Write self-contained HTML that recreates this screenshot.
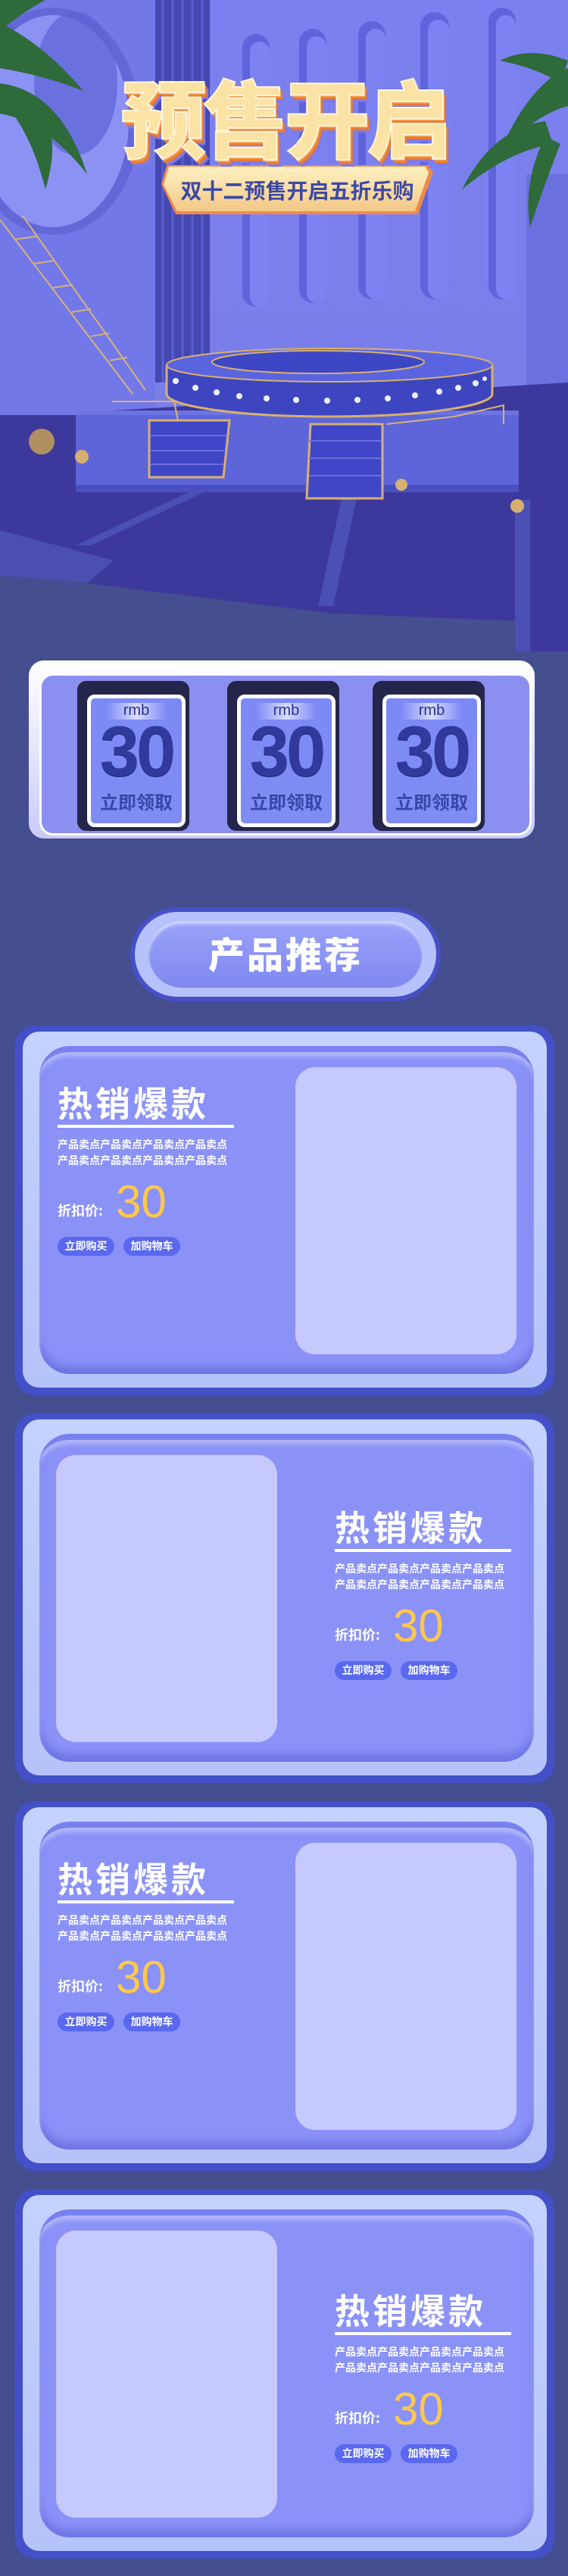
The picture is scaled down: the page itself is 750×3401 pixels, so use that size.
<!DOCTYPE html>
<html><head><meta charset="utf-8"><style>
*{margin:0;padding:0;box-sizing:border-box}
body{width:750px;height:3401px;background:#454e8f;position:relative;overflow:hidden;font-family:"Liberation Sans","Noto Sans CJK SC",sans-serif}
.abs{position:absolute}
.coupon{position:absolute;top:899px;width:148px;height:198px;background:#23264a;border-radius:12px}
.coupon .in{position:absolute;left:13px;top:18px;width:130px;height:175px;background:linear-gradient(#7d8af6,#7f8cf3);border:5px solid #fff;border-radius:10px;text-align:center;color:#2f3a9c}
.coupon .rmb{position:absolute;left:20px;right:20px;top:6px;height:22px;font-size:20px;line-height:20px;background:linear-gradient(90deg,rgba(255,255,255,0),rgba(255,255,255,.7),rgba(255,255,255,0));color:#2b3290}
.coupon .n{position:absolute;left:0;right:0;top:22px;font-size:94px;font-weight:bold;line-height:96px;letter-spacing:-4px;color:#2f3a9c;text-shadow:0 1px 0 #1c2470}
.coupon .t{position:absolute;left:0;right:0;top:118px;font-size:24px;font-weight:bold;color:#3a45a8;font-family:"Noto Sans CJK SC",sans-serif}
.card{position:absolute;left:20px;width:712px;height:488px;background:#4350c8;border-radius:26px}
.card .fr{position:absolute;left:10px;top:8px;right:10px;bottom:10px;background:linear-gradient(#c4d2ff,#b4c3fa);border-radius:22px}
.card .pn{position:absolute;left:32px;top:27px;width:653px;height:433px;background:#8a92f8;border-radius:40px;border-top:8px solid #7882ee;box-shadow:inset 0 6px 6px rgba(255,255,255,.35),inset 0 -10px 10px rgba(80,90,210,.5)}
.card .img{position:absolute;width:292px;height:379px;top:55px;background:#c6c9fd;border-radius:26px}
.txt{position:absolute;color:#fff;font-family:"Noto Sans CJK SC",sans-serif}
.txt .h{font-size:46px;font-weight:bold;line-height:46px;letter-spacing:4px;white-space:nowrap}
.txt .u{width:233px;height:4px;background:#fff;margin-top:7px}
.txt .d{font-size:14px;font-weight:bold;line-height:21px;margin-top:12px;white-space:nowrap}
.txt .p{margin-top:18px;height:50px;position:relative}
.txt .p span{position:absolute;left:0;bottom:0;font-size:18px;font-weight:bold}
.txt .p b{position:absolute;left:77px;bottom:-6px;font-size:60px;font-weight:normal;color:#fdc84a;font-family:"Liberation Sans",sans-serif;line-height:60px}
.txt .b{margin-top:22px;display:flex;gap:12px}
.txt .b i{font-style:normal;display:block;width:75px;height:25px;border-radius:13px;background:#5a68ef;font-size:14px;font-weight:bold;line-height:25px;text-align:center}
</style></head><body>

<svg class="abs" style="left:0;top:0" width="750" height="860" viewBox="0 0 750 860">
<defs>
<linearGradient id="wall" x1="0" y1="0" x2="0" y2="1"><stop offset="0" stop-color="#7b80f0"/><stop offset="1" stop-color="#7a7ee8"/></linearGradient>
<linearGradient id="gold" x1="0" y1="0" x2="0" y2="1"><stop offset="0" stop-color="#fff1c2"/><stop offset="1" stop-color="#f3c887"/></linearGradient>
</defs>
<rect width="750" height="860" fill="#454e8f"/>
<rect width="750" height="560" fill="url(#wall)"/>
<rect x="0" y="0" width="205" height="560" fill="#7378e8"/>
<ellipse cx="70" cy="160" rx="115" ry="150" fill="#6367d8"/>
<ellipse cx="70" cy="160" rx="100" ry="140" fill="#8b92f4"/>
<ellipse cx="100" cy="110" rx="55" ry="95" fill="#5e62d6" opacity=".7"/>
<rect x="205" y="0" width="72" height="505" fill="#4448b0"/>
<g stroke="#5a5fd0" stroke-width="3">
<line x1="215" y1="0" x2="215" y2="505"/><line x1="228" y1="0" x2="228" y2="505"/><line x1="241" y1="0" x2="241" y2="505"/><line x1="254" y1="0" x2="254" y2="505"/><line x1="267" y1="0" x2="267" y2="505"/></g>
<g fill="#5f63dc">
<rect x="320" y="45" width="36" height="360" rx="18"/><rect x="395" y="38" width="36" height="362" rx="18"/><rect x="473" y="28" width="36" height="367" rx="18"/><rect x="555" y="16" width="38" height="379" rx="19"/><rect x="645" y="10" width="36" height="385" rx="18"/></g>
<g fill="#7d82f2">
<rect x="330" y="55" width="26" height="350" rx="13"/><rect x="405" y="48" width="26" height="352" rx="13"/><rect x="483" y="38" width="26" height="357" rx="13"/><rect x="565" y="26" width="28" height="369" rx="14"/><rect x="655" y="20" width="26" height="375" rx="13"/></g>
<rect x="695" y="230" width="55" height="330" fill="#6b70e0"/>
<!-- floor -->
<polygon points="0,548 100,548 100,545 750,505 750,860 0,860" fill="#3d389c"/>
<!-- lighter gaps between tiles -->
<polygon points="0,700 150,740 115,770 0,760" fill="#4a4fb0"/>
<polygon points="115,770 440,810 440,860 110,860" fill="#454e8f"/>
<polygon points="0,760 115,770 110,860 0,860" fill="#454e8f"/>
<polygon points="440,810 690,820 700,860 440,860" fill="#454e8f"/>
<polygon points="270,640 290,640 120,720 100,720" fill="#4a50b4"/>
<polygon points="455,640 475,640 440,800 420,800" fill="#4a50b4"/>
<polygon points="680,660 700,660 700,860 680,860" fill="#4a50b4"/>
<!-- stage base -->
<rect x="100" y="542" width="585" height="108" fill="#5d65d8"/>
<rect x="100" y="542" width="585" height="6" fill="#6c74e4"/>
<rect x="100" y="640" width="585" height="10" fill="#4a4fc0"/>
<!-- stairs -->
<g fill="#3f47c8" stroke="#d8b070" stroke-width="3">
<polygon points="197,555 303,555 295,630 197,630"/><polygon points="410,560 505,560 505,658 405,658"/></g>
<g stroke="#6a70e0" stroke-width="2"><line x1="199" y1="575" x2="300" y2="575"/><line x1="199" y1="595" x2="298" y2="595"/><line x1="199" y1="613" x2="296" y2="613"/><line x1="408" y1="582" x2="503" y2="582"/><line x1="408" y1="605" x2="503" y2="605"/><line x1="408" y1="628" x2="503" y2="628"/></g>
<!-- rails -->
<g stroke="#d4b27a" stroke-width="2" fill="none"><path d="M148 530 L230 530 L235 555"/><path d="M510 560 L600 550 L665 535 L665 560"/></g>
<!-- disk -->
<ellipse cx="435" cy="520" rx="215" ry="30" fill="#3d46c0" stroke="#d7b06e" stroke-width="3"/>
<rect x="220" y="482" width="430" height="38" fill="#3d46c0"/>
<line x1="220" y1="482" x2="220" y2="520" stroke="#d7b06e" stroke-width="3"/><line x1="650" y1="482" x2="650" y2="520" stroke="#d7b06e" stroke-width="3"/>
<ellipse cx="435" cy="482" rx="215" ry="22" fill="#5a63e0" stroke="#d7b06e" stroke-width="2"/>
<ellipse cx="420" cy="478" rx="140" ry="15" fill="#3d46c4" stroke="#d7b06e" stroke-width="2"/>
<g fill="#eef0ff">
<circle cx="232" cy="503" r="4"/><circle cx="258" cy="512" r="4"/><circle cx="286" cy="518" r="4"/><circle cx="316" cy="523" r="4"/><circle cx="352" cy="526" r="4"/><circle cx="391" cy="528" r="4"/><circle cx="432" cy="529" r="4"/><circle cx="472" cy="528" r="4"/><circle cx="512" cy="526" r="4"/><circle cx="548" cy="522" r="4"/><circle cx="580" cy="517" r="4"/><circle cx="605" cy="512" r="4"/><circle cx="628" cy="506" r="4"/><circle cx="640" cy="500" r="3"/></g>
<!-- ladder -->
<g stroke="#d4b27a" stroke-width="2"><line x1="0" y1="290" x2="175" y2="520"/><line x1="30" y1="285" x2="192" y2="515"/>
<line x1="20" y1="316" x2="48" y2="312"/><line x1="45" y1="348" x2="72" y2="344"/><line x1="70" y1="380" x2="96" y2="376"/><line x1="95" y1="412" x2="120" y2="408"/><line x1="120" y1="444" x2="144" y2="440"/><line x1="145" y1="476" x2="168" y2="472"/></g>
<circle cx="55" cy="583" r="17" fill="#b09060"/><circle cx="108" cy="603" r="9" fill="#d6b070"/><circle cx="530" cy="640" r="8" fill="#d6b070"/><circle cx="683" cy="668" r="9" fill="#d6b070"/>
<g fill="#2e6a3a"><path d="M0 30 Q60 60 110 120 Q60 100 0 90Z"/><path d="M0 110 Q80 120 115 230 Q60 160 0 150Z"/><path d="M20 120 Q90 150 60 250 Q40 170 0 130Z"/><path d="M0 40 Q40 10 60 0 L0 0Z"/></g>
<g fill="#2e6a3a"><path d="M750 90 Q700 110 660 200 Q710 150 750 140Z"/><path d="M720 160 Q650 170 610 250 Q670 200 730 190Z"/><path d="M720 180 Q690 240 700 300 Q720 240 740 190Z"/><path d="M750 80 Q700 60 660 80 Q710 90 740 110Z"/></g>
<polygon points="220,218 565,218 572,228 552,283 232,283 213,243" fill="#f08a4a"/>
<polygon points="223,220 562,220 566,228 548,279 234,279 216,244" fill="url(#gold)"/>
</svg>
<div class="abs" style="left:160px;top:92px;width:470px;font-size:112px;font-weight:900;line-height:120px;color:#fbe3a6;letter-spacing:-4px;font-family:'Noto Sans CJK SC',sans-serif;text-shadow:2px 3px 0 #f39a4a,4px 6px 0 #e77a34,6px 9px 0 #7e7ae8;-webkit-text-stroke:2px #fff6dc;white-space:nowrap">预售开启</div>
<div class="abs" style="left:213px;top:233px;width:359px;text-align:center;font-size:28px;font-weight:bold;color:#3d4aa4;font-family:'Noto Sans CJK SC',sans-serif;line-height:36px">双十二预售开启五折乐购</div>

<div class="abs" style="left:38px;top:872px;width:668px;height:235px;background:linear-gradient(#ffffff,#c9ccfb);border-radius:20px"></div>
<div class="abs" style="left:52px;top:889px;width:650px;height:214px;background:#8a8ff0;border-radius:18px;border:3px solid #fff"></div>
<div class="coupon" style="left:102px"><div class="in"><div class="rmb">rmb</div><div class="n">30</div><div class="t">立即领取</div></div></div>
<div class="coupon" style="left:300px"><div class="in"><div class="rmb">rmb</div><div class="n">30</div><div class="t">立即领取</div></div></div>
<div class="coupon" style="left:492px"><div class="in"><div class="rmb">rmb</div><div class="n">30</div><div class="t">立即领取</div></div></div>

<div class="abs" style="left:172px;top:1198px;width:410px;height:124px;border-radius:62px;background:#4650c8"></div>
<div class="abs" style="left:178px;top:1204px;width:398px;height:112px;border-radius:56px;background:#b6c2fb"></div>
<div class="abs" style="left:196px;top:1216px;width:362px;height:88px;border-radius:44px;background:linear-gradient(#9aa2fa,#7f88ef);box-shadow:inset 0 4px 4px rgba(255,255,255,.6)"></div>
<div class="abs" style="left:172px;top:1222px;width:410px;text-align:center;font-size:48px;font-weight:900;color:#fff;line-height:70px;letter-spacing:3px;font-family:'Noto Sans CJK SC',sans-serif">产品推荐</div>

<div class="card" style="top:1354px"><div class="fr"></div><div class="pn"></div><div class="img" style="left:370px"></div>
<div class="txt" style="left:56px;top:78px"><div class="h">热销爆款</div><div class="u"></div><div class="d">产品卖点产品卖点产品卖点产品卖点<br>产品卖点产品卖点产品卖点产品卖点</div><div class="p"><span>折扣价:</span><b>30</b></div><div class="b"><i>立即购买</i><i>加购物车</i></div></div></div>

<div class="card" style="top:1866px"><div class="fr"></div><div class="pn"></div><div class="img" style="left:54px"></div>
<div class="txt" style="left:422px;top:126px"><div class="h">热销爆款</div><div class="u"></div><div class="d">产品卖点产品卖点产品卖点产品卖点<br>产品卖点产品卖点产品卖点产品卖点</div><div class="p"><span>折扣价:</span><b>30</b></div><div class="b"><i>立即购买</i><i>加购物车</i></div></div></div>

<div class="card" style="top:2378px"><div class="fr"></div><div class="pn"></div><div class="img" style="left:370px"></div>
<div class="txt" style="left:56px;top:78px"><div class="h">热销爆款</div><div class="u"></div><div class="d">产品卖点产品卖点产品卖点产品卖点<br>产品卖点产品卖点产品卖点产品卖点</div><div class="p"><span>折扣价:</span><b>30</b></div><div class="b"><i>立即购买</i><i>加购物车</i></div></div></div>

<div class="card" style="top:2890px"><div class="fr"></div><div class="pn"></div><div class="img" style="left:54px"></div>
<div class="txt" style="left:422px;top:136px"><div class="h">热销爆款</div><div class="u"></div><div class="d">产品卖点产品卖点产品卖点产品卖点<br>产品卖点产品卖点产品卖点产品卖点</div><div class="p"><span>折扣价:</span><b>30</b></div><div class="b"><i>立即购买</i><i>加购物车</i></div></div></div>

</body></html>
